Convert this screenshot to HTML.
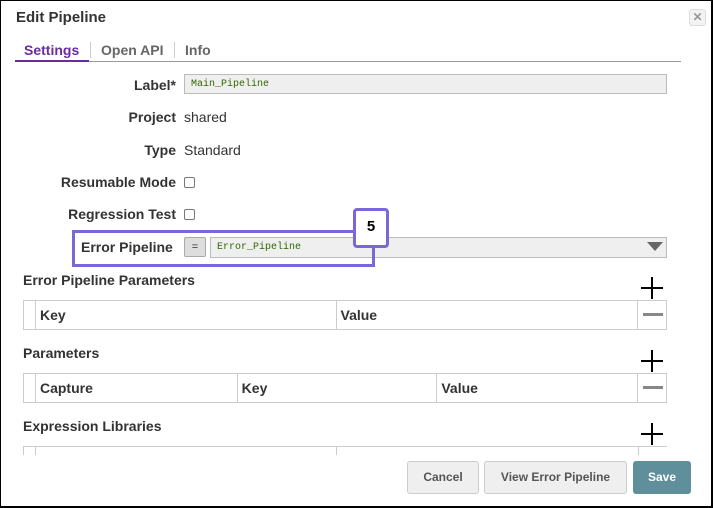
<!DOCTYPE html>
<html><head><style>
*{box-sizing:border-box;margin:0;padding:0}
body{width:713px;height:508px;background:#fff;font-family:"Liberation Sans",sans-serif;color:#333;position:relative;overflow:hidden}
.frame{position:absolute;left:0;top:0;width:713px;height:508px;border:1px solid #000;border-right:2px solid #000;border-bottom:2px solid #000}
.a{position:absolute}
.lbl{position:absolute;font-size:14px;font-weight:bold;color:#333;text-align:right;width:160px;left:16px}
.val{position:absolute;font-size:14px;color:#333;left:184px}
.cb{position:absolute;width:11px;height:11px;border:1px solid #777;border-radius:2px;left:184px}
.h{position:absolute;left:23px;font-size:14px;font-weight:bold;color:#333}
.tbl{position:absolute;left:23px;width:644px;height:30px;border:1px solid #ccc;display:flex}
.tbl div{border-right:1px solid #ccc;font-size:14px;font-weight:bold;padding:6px 0 0 4px;height:100%}
.tbl div:last-child{border-right:none}
.plus{position:absolute;left:641px;width:22px;height:22px}
.plus:before{content:"";position:absolute;left:0;top:10px;width:22px;height:2px;background:#000}
.plus:after{content:"";position:absolute;left:10px;top:0;width:2px;height:22px;background:#000}
.minus{position:absolute;left:643px;width:20px;height:3px;background:#888}
.btn{position:absolute;top:461px;height:33px;border:1px solid #ccc;border-radius:3px;background:#efefef;font-size:12px;font-weight:bold;color:#555;text-align:center;line-height:31px}
.inp{position:absolute;border:1px solid #bbb;background:#efefef;padding:0 6px}
.inp span{position:absolute;left:6px;top:4px;font-family:"Liberation Mono",monospace;font-size:10px;line-height:12px;color:#336600}
</style></head><body>
<div class="frame"></div>
<div class="a" style="left:16px;top:9px;font-size:15px;font-weight:bold;color:#333">Edit Pipeline</div>
<div class="a" style="left:689px;top:9px;width:17px;height:17px;border:1px solid #ddd;border-radius:3px;background:#f3f3f3;color:#999;font-size:12px;text-align:center;line-height:15px;font-weight:bold">✕</div>
<div class="a" style="left:15px;top:61px;width:666px;height:1px;background:#999"></div>
<div class="a" style="left:15px;top:60px;width:74px;height:2px;background:#6a2c9e"></div>
<div class="a" style="left:24px;top:42px;font-size:14px;font-weight:bold;color:#6a2c9e">Settings</div>
<div class="a" style="left:90px;top:42px;width:1px;height:16px;background:#ccc"></div>
<div class="a" style="left:101px;top:42px;font-size:14px;font-weight:bold;color:#666">Open API</div>
<div class="a" style="left:174px;top:42px;width:1px;height:16px;background:#ccc"></div>
<div class="a" style="left:185px;top:42px;font-size:14px;font-weight:bold;color:#666">Info</div>

<div class="lbl" style="top:77px">Label*</div>
<div class="inp" style="left:184px;top:74px;width:483px;height:20px"><span>Main_Pipeline</span></div>
<div class="lbl" style="top:109px">Project</div><div class="val" style="top:109px">shared</div>
<div class="lbl" style="top:142px">Type</div><div class="val" style="top:142px">Standard</div>
<div class="lbl" style="top:174px">Resumable Mode</div><div class="cb" style="top:177px"></div>
<div class="lbl" style="top:206px">Regression Test</div><div class="cb" style="top:209px"></div>

<div class="a" style="left:81px;top:239px;font-size:14px;font-weight:bold">Error Pipeline</div>
<div class="a" style="left:184px;top:237px;width:22px;height:20px;border:1px solid #aaa;background:#ddd;font-size:11px;text-align:center;line-height:18px;border-radius:2px">=</div>
<div class="inp" style="left:210px;top:237px;width:457px;height:21px"><span>Error_Pipeline</span></div>
<div class="a" style="left:647px;top:242px;width:0;height:0;border-left:8px solid transparent;border-right:8px solid transparent;border-top:9px solid #666"></div>
<div class="a" style="left:72px;top:230px;width:303px;height:37px;border:3px solid #7a68d8"></div>
<div class="a" style="left:353px;top:208px;width:36px;height:40px;border:3px solid #7a68d8;border-radius:4px;background:#fff;font-size:15px;font-weight:bold;color:#000;text-align:center;line-height:32px">5</div>

<div class="h" style="top:272px">Error Pipeline Parameters</div>
<div class="plus" style="top:277px"></div>
<div class="tbl" style="top:300px"><div style="width:12px"></div><div style="width:301px">Key</div><div style="width:302px">Value</div><div style="width:28px"></div></div>
<div class="minus" style="top:313px"></div>

<div class="h" style="top:345px">Parameters</div>
<div class="plus" style="top:350px"></div>
<div class="tbl" style="top:373px"><div style="width:12px"></div><div style="width:202px">Capture</div><div style="width:200px">Key</div><div style="width:201px">Value</div><div style="width:28px"></div></div>
<div class="minus" style="top:386px"></div>

<div class="h" style="top:418px">Expression Libraries</div>
<div class="plus" style="top:423px"></div>
<div class="a" style="left:23px;top:446px;width:644px;height:1px;background:#ccc"></div>
<div class="a" style="left:23px;top:446px;width:1px;height:10px;background:#ccc"></div>
<div class="a" style="left:35px;top:446px;width:1px;height:10px;background:#ccc"></div>
<div class="a" style="left:336px;top:446px;width:1px;height:10px;background:#ccc"></div>
<div class="a" style="left:638px;top:446px;width:1px;height:10px;background:#ccc"></div>
<div class="a" style="left:1px;top:455px;width:710px;height:51px;background:#fff"></div>

<div class="btn" style="left:407px;width:72px">Cancel</div>
<div class="btn" style="left:484px;width:143px">View Error Pipeline</div>
<div class="btn" style="left:633px;width:58px;background:#5e8f9b;border-color:#5e8f9b;color:#fff">Save</div>
</body></html>
